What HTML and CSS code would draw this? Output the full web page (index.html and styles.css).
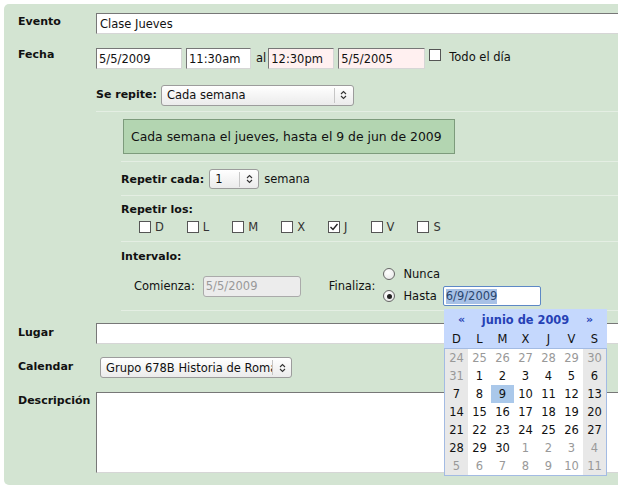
FILE: index.html
```html
<!DOCTYPE html>
<html lang="es">
<head>
<meta charset="utf-8">
<title>Evento</title>
<link rel="stylesheet" href="styles.css">
</head>
<body>
<form class="panel">
  <div class="row r-evento">
    <label class="lbl">Evento</label>
    <input class="txt wide" value="Clase Jueves">
  </div>

  <div class="row r-fecha">
    <label class="lbl">Fecha</label>
    <div class="field">
      <div class="dateline">
        <input class="txt dt w86" value="5/5/2009">
        <input class="txt dt w65" value="11:30am">
        <span class="al">al</span>
        <input class="txt dt pink w66" value="12:30pm">
        <input class="txt dt pink w87" value="5/5/2005">
        <span class="cb cb-allday"></span>
        <span class="allday">Todo el día</span>
      </div>

      <div class="repeat">
        <div class="rep-head">
          <span class="sublbl">Se repite:</span>
          <div class="select s-repite">
            <span class="val">Cada semana</span>
            <span class="arr"><svg width="7" height="10" viewBox="0 0 7 10"><path d="M1 4 L3.5 1.5 L6 4 M1 6 L3.5 8.5 L6 6" fill="none" stroke="#333" stroke-width="1.1"/></svg></span>
          </div>
        </div>

        <div class="rep-body">
          <div class="sec sec-summary">
            <div class="summary">Cada semana el jueves, hasta el 9 de jun de 2009</div>
          </div>

          <div class="sec sec-cada">
            <span class="sublbl">Repetir cada:</span>
            <div class="select s-num">
              <span class="val">1</span>
              <span class="arr"><svg width="7" height="10" viewBox="0 0 7 10"><path d="M1 4 L3.5 1.5 L6 4 M1 6 L3.5 8.5 L6 6" fill="none" stroke="#333" stroke-width="1.1"/></svg></span>
            </div>
            <span class="unit">semana</span>
          </div>

          <div class="sec sec-los">
            <div class="sublbl">Repetir los:</div>
            <div class="days">
              <span class="day"><span class="cb"></span><span class="dl">D</span></span>
              <span class="day"><span class="cb"></span><span class="dl">L</span></span>
              <span class="day"><span class="cb"></span><span class="dl">M</span></span>
              <span class="day"><span class="cb"></span><span class="dl">X</span></span>
              <span class="day"><span class="cb"><svg width="10" height="10" viewBox="0 0 10 10"><path d="M1.5 5 L4 7.5 L8.5 2" fill="none" stroke="#222" stroke-width="1.4"/></svg></span><span class="dl">J</span></span>
              <span class="day"><span class="cb"></span><span class="dl">V</span></span>
              <span class="day"><span class="cb"></span><span class="dl">S</span></span>
            </div>
          </div>

          <div class="sec sec-int">
            <div class="sublbl">Intervalo:</div>
            <div class="introw">
              <span class="intlbl">Comienza:</span>
              <input class="txt dis" value="5/5/2009" disabled>
              <span class="intlbl fin">Finaliza:</span>
              <div class="radios">
                <div class="ropt"><span class="radio"></span><span class="rtxt">Nunca</span></div>
                <div class="ropt r2"><span class="radio on"></span><span class="rtxt">Hasta</span><div class="until"><span class="selt">6/9/2009</span></div></div>
              </div>
            </div>
          </div>
        </div>
      </div>
    </div>
  </div>

  <div class="row r-lugar">
    <label class="lbl">Lugar</label>
    <input class="txt wide">
  </div>

  <div class="row r-cal">
    <label class="lbl">Calendar</label>
    <div class="select s-cal">
      <span class="val">Grupo 678B Historia de Roma</span>
      <span class="arr"><svg width="7" height="10" viewBox="0 0 7 10"><path d="M1 4 L3.5 1.5 L6 4 M1 6 L3.5 8.5 L6 6" fill="none" stroke="#333" stroke-width="1.1"/></svg></span>
    </div>
  </div>

  <div class="row r-desc">
    <label class="lbl">Descripción</label>
    <textarea class="txt wide area"></textarea>
  </div>
</form>

<div class="cal">
  <div class="cal-head">
    <span class="nav">«</span>
    <span class="title">junio de 2009</span>
    <span class="nav">»</span>
  </div>
  <div class="cal-names">
    <span>D</span><span>L</span><span>M</span><span>X</span><span>J</span><span>V</span><span>S</span>
  </div>
  <div class="cal-grid">
    <span class="we o">24</span><span class="o">25</span><span class="o">26</span><span class="o">27</span><span class="o">28</span><span class="o">29</span><span class="we o">30</span>
    <span class="we o">31</span><span>1</span><span>2</span><span>3</span><span>4</span><span>5</span><span class="we">6</span>
    <span class="we">7</span><span>8</span><span class="sel">9</span><span>10</span><span>11</span><span>12</span><span class="we">13</span>
    <span class="we">14</span><span>15</span><span>16</span><span>17</span><span>18</span><span>19</span><span class="we">20</span>
    <span class="we">21</span><span>22</span><span>23</span><span>24</span><span>25</span><span>26</span><span class="we">27</span>
    <span class="we">28</span><span>29</span><span>30</span><span class="o">1</span><span class="o">2</span><span class="o">3</span><span class="we o">4</span>
    <span class="we o">5</span><span class="o">6</span><span class="o">7</span><span class="o">8</span><span class="o">9</span><span class="o">10</span><span class="we o">11</span>
  </div>
</div>
</body>
</html>
```

FILE: styles.css
```css
html, body {
  margin: 0;
  padding: 0;
  overflow: hidden;
  background: #fff;
}
body {
  position: relative;
  width: 618px;
  height: 487px;
  font-family: "DejaVu Sans", sans-serif;
  font-size: 11.5px;
  color: #111;
}

.panel {
  box-sizing: border-box;
  width: 700px;
  margin: 4px 0 0 4px;
  padding: 9px 0 12px 0;
  background: #d3e4d2;
  border-radius: 5px;
}

.row {
  display: flex;
  align-items: flex-start;
}
.lbl {
  flex: none;
  box-sizing: border-box;
  width: 92px;
  padding-left: 14px;
  font-weight: bold;
  font-size: 11px;
  line-height: 13px;
}
.r-evento .lbl { margin-top: 2px; }
.r-fecha { margin-top: 14px; }
.r-fecha .lbl { margin-top: 0; }
.r-lugar { margin-top: 12px; }
.r-lugar .lbl { margin-top: 3px; }
.r-cal { margin-top: 13px; }
.r-cal .lbl { margin-top: 3px; }
.r-desc { margin-top: 14px; }
.r-desc .lbl { margin-top: 2px; }

.txt {
  box-sizing: border-box;
  height: 21px;
  margin: 0;
  padding: 0 2px;
  border: 1px solid;
  border-color: #777 #d6d6d6 #d6d6d6 #777;
  background: #fff;
  font-family: "DejaVu Sans", sans-serif;
  font-size: 11.5px;
  color: #111;
  outline: none;
}
.wide { width: 560px; padding-left: 3px; }
.area { height: 81px; resize: none; }

.field { flex: 1; }
.dateline {
  display: flex;
  align-items: flex-start;
}
.dateline .txt { margin-right: 4px; }
.w86 { width: 86px; }
.w65 { width: 65px; }
.w66 { width: 66px; }
.w87 { width: 87px; }
.pink { background: #fff0f0; }
.dateline .al { margin: 4px 2px 0 1px; line-height: 13px; }
.cb {
  flex: none;
  box-sizing: border-box;
  display: inline-flex;
  align-items: center;
  justify-content: center;
  width: 12px;
  height: 12px;
  border: 1px solid #555;
  background: #fff;
}
.cb-allday { margin-top: 1px; margin-left: 0; }
.allday { margin: 3px 0 0 8px; line-height: 13px; }

.repeat { margin-top: 16px; }
.rep-head {
  display: flex;
  align-items: center;
  height: 27px;
  box-sizing: border-box;
  padding-bottom: 6px;
  border-bottom: 1px solid #e4eee3;
}
.sublbl {
  font-weight: bold;
  font-size: 11px;
  line-height: 13px;
}
.rep-head .sublbl { margin-right: 4px; margin-top: -2px; }

.select {
  box-sizing: border-box;
  display: inline-flex;
  align-items: center;
  height: 21px;
  padding-left: 5px;
  border: 1px solid #9c9c9c;
  border-radius: 3px;
  background: linear-gradient(#ffffff, #ebebeb);
}
.select .val {
  flex: 1;
  overflow: hidden;
  white-space: nowrap;
}
.select .arr {
  flex: none;
  display: flex;
  align-items: center;
  justify-content: center;
  width: 18px;
  height: 15px;
  border-left: 1px solid #c6c6c6;
}
.s-repite { width: 193px; }
.s-num { width: 50px; height: 20px; }
.s-cal { width: 192px; margin-left: 4px; }

.rep-body { padding-left: 25px; }
.sec { border-bottom: 1px solid #e4eee3; }
.sec-summary { padding: 7px 0; }
.summary {
  box-sizing: border-box;
  display: flex;
  align-items: center;
  width: 332px;
  height: 35px;
  margin-left: 2px;
  padding-left: 7px;
  background: #b3d5b1;
  border: 1px solid #7d9b7c;
  font-size: 12.4px;
}
.sec-cada {
  display: flex;
  align-items: center;
  padding: 7px 0 6px;
}
.sec-cada .sublbl { margin-right: 5px; }
.sec-cada .unit { margin-left: 5px; }

.sec-los { padding: 7px 0 8px; }
.days {
  display: flex;
  margin-top: 5px;
  padding-left: 18px;
}
.day {
  display: inline-flex;
  align-items: flex-end;
  margin-right: 23px;
}
.day .dl {
  margin-left: 4px;
  font-size: 11.5px;
  line-height: 11px;
  color: #333;
}

.sec-int { padding: 8px 0 4px; }
.introw {
  display: flex;
  align-items: center;
  margin-top: 3px;
  padding-left: 13px;
}
.intlbl { margin-right: 8px; }
.dis {
  width: 98px;
  border: 1px solid #aaa;
  border-radius: 3px;
  background: #ececec;
  color: #999;
}
.fin { margin-left: 28px; margin-right: 8px; }
.radios {
  display: flex;
  flex-direction: column;
}
.ropt {
  display: flex;
  align-items: center;
  height: 15px;
}
.ropt.r2 { height: 20px; margin-top: 5px; }
.radio {
  flex: none;
  box-sizing: border-box;
  display: flex;
  align-items: center;
  justify-content: center;
  width: 12px;
  height: 12px;
  border: 1px solid #666;
  border-radius: 50%;
  background: radial-gradient(circle at 40% 35%, #fff, #e4e4e4);
}
.radio.on::after {
  content: "";
  width: 5px;
  height: 5px;
  border-radius: 50%;
  background: #222;
}
.rtxt { margin-left: 8px; }
.until {
  box-sizing: border-box;
  display: flex;
  align-items: center;
  width: 98px;
  height: 20px;
  margin-left: 6px;
  padding-left: 2px;
  border: 1px solid #5d88c6;
  border-radius: 2px;
  background: #fff;
}
.selt {
  background: #a7c1e6;
  color: #2a466f;
  line-height: 15px;
}

/* calendar popup */
.cal {
  position: absolute;
  left: 444px;
  top: 309px;
  width: 163px;
  font-size: 11.5px;
  color: #111;
}
.cal-head {
  display: flex;
  align-items: center;
  justify-content: space-between;
  height: 21px;
  padding: 0 14px 0 14px;
  background: #c5d8fd;
  color: #2641b5;
  font-weight: bold;
}
.cal-head .title { font-size: 11.4px; }
.cal-head .nav { font-size: 11px; }
.cal-names {
  display: grid;
  grid-template-columns: repeat(7, 23px);
  height: 18px;
  padding: 0 1px;
  align-items: center;
  background: #c5d8fd;
  text-align: center;
}
.cal-grid {
  display: grid;
  grid-template-columns: repeat(7, 23px);
  grid-auto-rows: 18px;
  border: 1px solid #a3bbe3;
  background: #fff;
}
.cal-grid span {
  display: flex;
  align-items: center;
  justify-content: center;
}
.cal-grid .we { background: #e8e8e8; }
.cal-grid .o { color: #999; }
.cal-grid .sel { background: #aac8ea; }
```
